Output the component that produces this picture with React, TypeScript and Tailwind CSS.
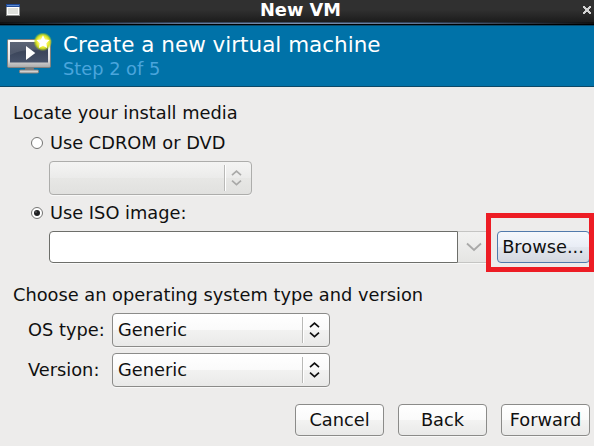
import React from "react";

function WindowIcon() {
  return (
    <svg width="14" height="12" viewBox="0 0 14 12" className="block" shapeRendering="crispEdges">
      <rect width="14" height="12" fill="#8f918d" />
      <rect width="14" height="3" fill="#204a97" />
      <rect x="1" y="1" width="12" height="1" fill="#5b8bd0" />
      <rect x="1" y="3" width="12" height="8" fill="#fff" />
      <rect x="2" y="4" width="10" height="6" fill="#dfe1dc" />
    </svg>
  );
}

function CloseIcon() {
  return (
    <svg width="8" height="8" viewBox="0 0 8 8" className="block" shapeRendering="crispEdges">
      <path
        fill="#d2d2d2"
        d="M0 0h2v1h1v1h2v-1h1v-1h2v2h-1v1h-1v2h1v1h1v2h-2v-1h-1v-1h-2v1h-1v1h-2v-2h1v-1h1v-2h-1v-1h-1z"
      />
    </svg>
  );
}

function MachineIcon() {
  return (
    <svg width="46" height="42" viewBox="0 0 46 42" className="block">
      <defs>
        <linearGradient id="frame" x1="0" y1="0" x2="0" y2="1">
          <stop offset="0" stopColor="#ffffff" />
          <stop offset="0.7" stopColor="#e2e2e2" />
          <stop offset="1" stopColor="#a8a8a8" />
        </linearGradient>
        <linearGradient id="screen" x1="0" y1="0" x2="0" y2="1">
          <stop offset="0" stopColor="#4a5468" />
          <stop offset="0.5" stopColor="#3c465b" />
          <stop offset="1" stopColor="#48536a" />
        </linearGradient>
        <radialGradient id="glow">
          <stop offset="0" stopColor="#fffef0" />
          <stop offset="0.55" stopColor="#f4f240" />
          <stop offset="0.75" stopColor="#d3e01c" stopOpacity="0.9" />
          <stop offset="1" stopColor="#a5cf18" stopOpacity="0" />
        </radialGradient>
      </defs>
      <path d="M18.5 34h8l1 4h-10z" fill="#777b7e" />
      <rect x="12.5" y="37" width="19" height="3" rx="1" fill="#d0d0d0" stroke="#85807b" />
      <rect x="0.5" y="6.5" width="43" height="28" rx="1.2" fill="url(#frame)" stroke="#81817f" />
      <rect x="3" y="9" width="38" height="20.5" fill="url(#screen)" />
      <path d="M3 9h38l-10 8q-16-1-28 5z" fill="#fff" fillOpacity="0.1" />
      <path d="M19 13v14l9.3-7z" fill="#fff" />
      <circle cx="35.8" cy="8.8" r="9.4" fill="url(#glow)" />
      <path
        d="M36 2.3l2 4.2 4.6.6-3.3 3.2.8 4.6-4.1-2.2-4.1 2.2.8-4.6-3.3-3.2 4.6-.6z"
        fill="#fff"
      />
    </svg>
  );
}

function Arrows({ disabled }: { disabled?: boolean }) {
  return (
    <svg
      width="12"
      height="18"
      viewBox="0 0 12 18"
      fill="none"
      stroke={disabled ? "#a9a9a8" : "#101010"}
      strokeWidth="1.7"
      className="block"
    >
      <path d="M1 6.2L5.5 2.2l4.5 4M1 11.6l4.5 4 4.5-4" />
    </svg>
  );
}

function Combo({ value, disabled, className }: { value?: string; disabled?: boolean; className: string }) {
  return (
    <div
      className={`flex h-[34px] items-center rounded-[4px] border pl-[5px] shadow-[0_1px_0_#f8f8f7] ${
        disabled
          ? "border-[#adadab] bg-[linear-gradient(#f4f4f3,#ebebea_50%,#e7e7e5_50%,#e1e1df)]"
          : "border-[#8b8b89] bg-[linear-gradient(#ffffff,#fafafa_50%,#f2f2f1_50%,#e9e9e8)]"
      } ${className}`}
    >
      <span className="flex-1">{value}</span>
      <span className="h-[26px] w-[2px] border-r border-l border-r-white border-l-[#b9b9b7]" />
      <span className="ml-[5px] mr-[8px]">
        <Arrows disabled={disabled} />
      </span>
    </div>
  );
}

function Radio({ label, checked }: { label: string; checked?: boolean }) {
  return (
    <div className="ml-[31px] flex h-[20px] items-center gap-[7px]">
      <svg width="12" height="12" viewBox="0 0 12 12" className="block">
        <circle cx="6" cy="6" r="5.5" fill="#fff" stroke="#747472" />
        {checked && <circle cx="6" cy="6" r="3" fill="#202022" />}
        {checked && <circle cx="5" cy="5" r="0.8" fill="#77777a" />}
      </svg>
      <span>{label}</span>
    </div>
  );
}

function FooterButton({ label }: { label: string }) {
  return (
    <button className="h-8 w-[89px] rounded-[4px] border border-[#8b8b89] bg-[linear-gradient(#ffffff,#fafafa_50%,#f3f3f2_50%,#e9e9e8)] whitespace-nowrap shadow-[0_1px_0_#f8f8f7]">
      {label}
    </button>
  );
}

export default function App() {
  return (
    <div className="h-[446px] w-[594px] overflow-hidden bg-[#edeceb] font-['DejaVu_Sans',sans-serif] text-[17.8px] leading-[20px] text-[#101010]">
      <div className="flex h-[22px] items-center bg-[linear-gradient(#303030_0%,#303030_45%,#1c1c1c)] pr-[3px] pl-[6px]">
        <div className="w-[14px] -translate-y-px">
          <WindowIcon />
        </div>
        <div className="flex-1 -translate-y-px pr-[2px] text-center font-bold text-white">New VM</div>
        <div className="-translate-y-px">
          <CloseIcon />
        </div>
      </div>
      <div className="h-px bg-[linear-gradient(90deg,#111,#34445c_30%,#43536c_50%,#34445c_70%,#111)]" />
      <div className="h-px bg-[linear-gradient(90deg,#111,#617796_30%,#7a90ae_50%,#617796_70%,#111)]" />
      <div className="h-px bg-black" />
      <header className="flex h-[62px] items-start border-t border-b border-[#0b4968] bg-[#0072a8] pl-[7px]">
        <div className="mt-[7px] w-[46px]">
          <MachineIcon />
        </div>
        <div className="ml-[10px] pt-[6px]">
          <h1 className="text-[21.5px] leading-[26px] text-white">Create a new virtual machine</h1>
          <p className="leading-[22px] text-[#4aa5dc]">Step 2 of 5</p>
        </div>
      </header>
      <main className="pt-[16px]">
        <h2 className="ml-[13px] h-[30px]">Locate your install media</h2>
        <Radio label="Use CDROM or DVD" />
        <Combo disabled className="mt-[8px] ml-[49px] w-[203px]" />
        <div className="mt-[8px]">
          <Radio label="Use ISO image:" checked />
        </div>
        <div className="-mt-[10px] flex h-[59px] items-start pl-[49px]">
          <div className="mt-[18px] h-8 w-[409px] rounded-l-[4px] border border-[#6d6e6a] bg-white shadow-[0_1px_0_#f8f8f7]" />
          <div className="mt-[18px] flex h-8 w-[28px] items-center justify-center border-t border-b border-[#c5c5c3] bg-[linear-gradient(#f2f2f1,#e5e5e3)] shadow-[0_1px_0_#f8f8f7]">
            <svg width="16" height="10" viewBox="0 0 16 10" fill="none" stroke="#a9a9a8" strokeWidth="1.8" className="-mt-px ml-[3px]">
              <path d="M1 1.5l7 6.5 7-6.5" />
            </svg>
          </div>
          <div className="flex h-[59px] w-[108px] items-start overflow-hidden border-[5px] border-[#ed1c24] pl-[6px]">
            <button className="mt-[13px] h-8 w-[93px] shrink-0 rounded-[4px] border border-[#517aac] bg-[linear-gradient(#f5f8fd,#e9edf5_50%,#e2e6ee_50%,#d4d8e0)] pr-px whitespace-nowrap">
              Browse...
            </button>
          </div>
        </div>
        <h2 className="mt-[13px] ml-[13px]">Choose an operating system type and version</h2>
        <div className="mt-[8px] ml-[28px] flex items-center">
          <span className="w-[84px]">OS type:</span>
          <Combo value="Generic" className="w-[218px]" />
        </div>
        <div className="mt-[6px] ml-[28px] flex items-center">
          <span className="w-[84px]">Version:</span>
          <Combo value="Generic" className="w-[218px]" />
        </div>
      </main>
      <footer className="mt-[17px] flex justify-end gap-[14px] pr-[4px]">
        <FooterButton label="Cancel" />
        <FooterButton label="Back" />
        <FooterButton label="Forward" />
      </footer>
    </div>
  );
}
